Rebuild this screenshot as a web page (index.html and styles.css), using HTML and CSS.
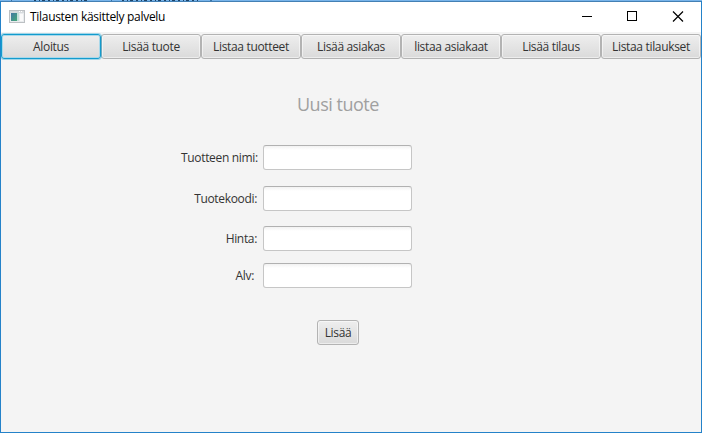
FILE: index.html
```html
<!DOCTYPE html>
<html lang="fi">
<head>
<meta charset="utf-8">
<title>Tilausten käsittely palvelu</title>
<link rel="stylesheet" href="styles.css">
</head>
<body>
<div class="window">
  <svg class="backdrop" width="702" height="1" viewBox="0 0 702 1">
    <path d="M0 .5h702" stroke="#78b4ea"/>
    <path d="M34 .5h54M122 .5h77" stroke="#1d4468" stroke-dasharray="2 3 1 2 3 3"/>
    <path d="M11 .5h1M111 .5h1M210 .5h2" stroke="#3b74a5"/>
  </svg>
  <header class="titlebar">
    <svg class="app-icon" width="16" height="14" viewBox="0 0 16 14">
      <defs><linearGradient id="screen" x1="0" y1="0" x2="1" y2="1"><stop offset="0" stop-color="#4478a4"/><stop offset="1" stop-color="#45a878"/></linearGradient></defs>
      <rect x=".5" y=".5" width="15" height="12" fill="#e9ecee" stroke="#bcc0c3"/>
      <rect x="1" y="1" width="14" height="2" fill="#d6dadd"/>
      <rect x="2" y="3" width="6" height="8" fill="url(#screen)"/>
      <rect x="8" y="3" width="2" height="8" fill="#c3dfd9"/>
      <rect x="11" y="4" width="3" height="7" fill="#fafafa"/>
      <path d="M10 1.500h1M12 1.500h1" stroke="#fff"/>
    </svg>
    <h1 class="title">Tilausten käsittely palvelu</h1>
    <svg class="controls" width="120" height="30" viewBox="0 0 120 30" fill="none" stroke="#000">
      <path d="M1 14.500h10"/>
      <rect x="46.500" y="9.500" width="9" height="9"/>
      <path d="M92 9.500l10 10M102 9.500l-10 10" stroke-width="1.200"/>
    </svg>
  </header>
  <nav class="tabs">
    <button class="btn focused"><span>Aloitus</span></button>
    <button class="btn"><span>Lisää tuote</span></button>
    <button class="btn"><span>Listaa tuotteet</span></button>
    <button class="btn"><span>Lisää asiakas</span></button>
    <button class="btn"><span>listaa asiakaat</span></button>
    <button class="btn"><span>Lisää tilaus</span></button>
    <button class="btn"><span>Listaa tilaukset</span></button>
  </nav>
  <main class="form">
    <h2 class="heading">Uusi tuote</h2>
    <div class="fields">
      <label for="name">Tuotteen nimi:</label><input id="name" type="text">
      <label for="code">Tuotekoodi:</label><input id="code" type="text">
      <label for="price">Hinta:</label><input id="price" type="text">
      <label class="vat" for="vat">Alv:</label><input id="vat" type="text">
    </div>
    <button class="btn submit"><span>Lisää</span></button>
  </main>
</div>
</body>
</html>
```

FILE: styles.css
```css
* { box-sizing: border-box; }
body {
  margin: 0;
  overflow: hidden;
  font: 12px/16px "Open Sans", "Noto Sans", sans-serif;
  letter-spacing: -0.33px;
  color: #333;
}
.window {
  width: 702px;
  height: 433px;
  border: 1px solid #2482c9;
  border-top: 0;
  background: #f4f4f4;
}
.backdrop {
  display: block;
  margin-left: -1px;
}
.titlebar {
  display: flex;
  align-items: flex-start;
  height: 31px;
  background: #fff;
  box-shadow: inset 0 1px #4380b4;
}
.app-icon { margin: 9px 0 0 8px; }
.title {
  margin: 8px 0 0 5px;
  font-size: 12px;
  font-weight: 400;
  line-height: 16px;
  letter-spacing: -0.3px;
  color: #000;
}
.controls { margin: 1px 0 0 auto; }
.tabs {
  display: grid;
  grid-template-columns: repeat(7, 100px);
  height: 25px;
  margin-top: 2px;
}
.btn {
  height: 25px;
  padding: 0;
  border: 1px solid #b3b3b3;
  border-radius: 3px;
  background: linear-gradient(#eeeeee, #dadada);
  box-shadow: inset 0 0 0 1px rgba(255, 255, 255, .5);
  font: inherit;
  letter-spacing: inherit;
  color: #333;
  text-align: center;
  white-space: nowrap;
}
.focused {
  border-color: #139bcd;
  box-shadow: inset 0 0 0 1px #a9d8ea, 0 0 0 1px rgba(3, 158, 211, .35);
  z-index: 1;
}
.form { padding: 33px 0 0 180px; }
.heading {
  width: 82px;
  margin: 0 0 0 116px;
  font-size: 18px;
  font-weight: 400;
  line-height: 24px;
  letter-spacing: -.5px;
  color: #a0a0a0;
  white-space: nowrap;
}
.fields {
  display: grid;
  grid-template-columns: 76px 149px;
  grid-template-rows: 41px 40px 37px 25px;
  column-gap: 6px;
  margin-top: 29px;
}
.fields label {
  height: 25px;
  line-height: 25px;
  text-align: right;
  white-space: nowrap;
}
.fields .vat { padding-right: 3px; }
.fields input {
  width: 149px;
  height: 25px;
  padding: 0 7px;
  border: 1px solid #c6c6c6;
  border-top-color: #b1b1b1;
  border-radius: 3px;
  background: linear-gradient(#f2f2f2, #fff 4px);
  font: inherit;
  outline: none;
}
.submit {
  display: block;
  width: 42px;
  margin: 32px 0 0 136px;
}
```
